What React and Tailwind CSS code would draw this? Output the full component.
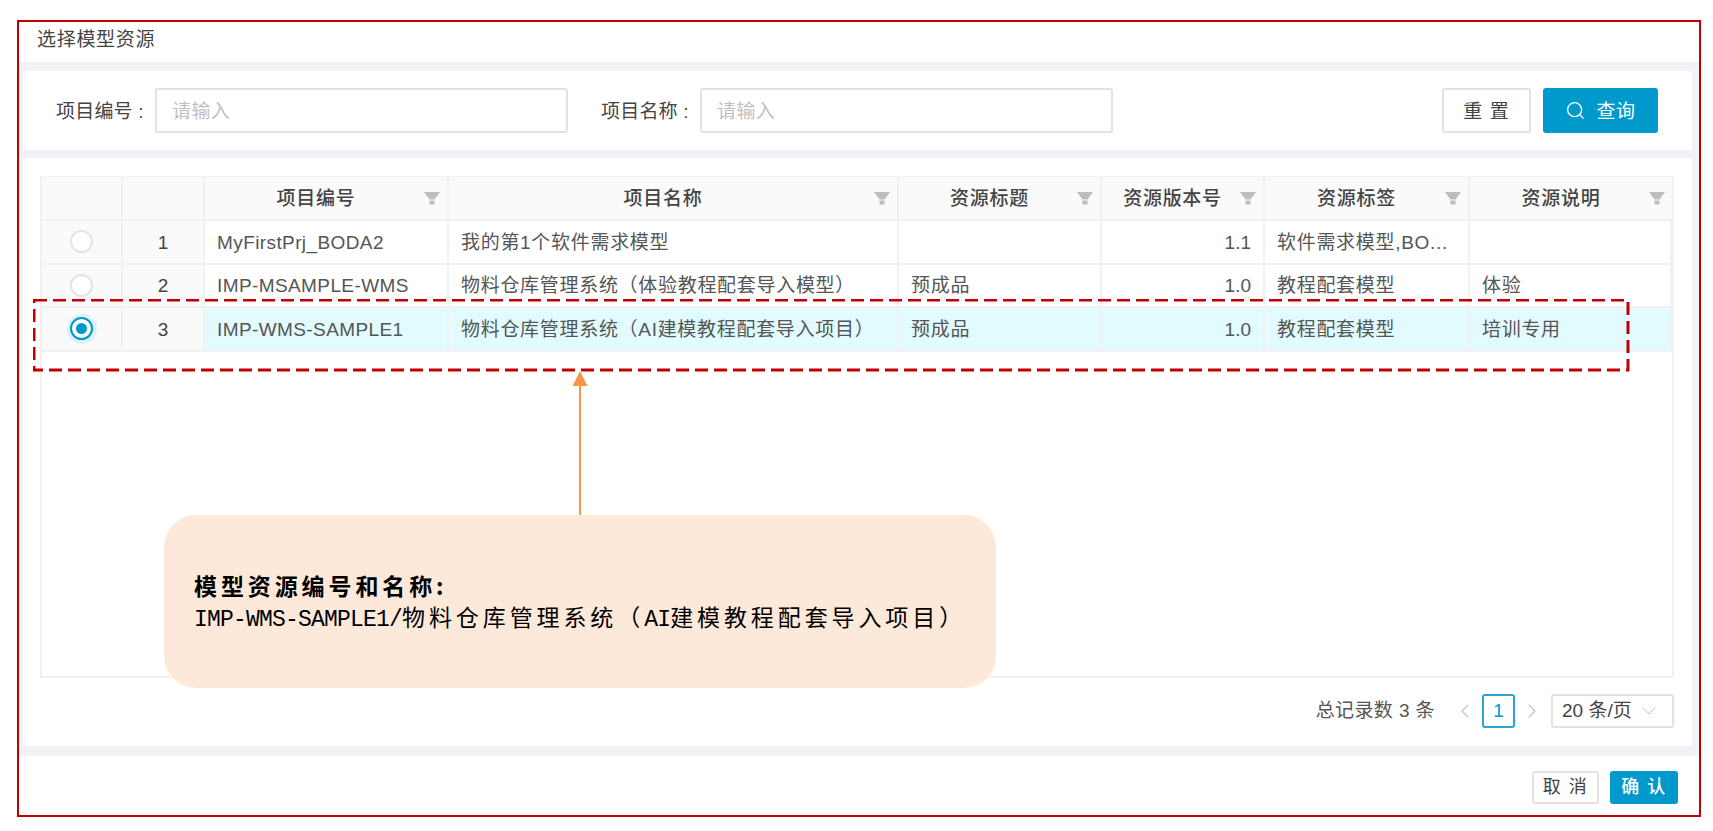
import { Search, ChevronLeft, ChevronRight, ChevronDown } from "lucide-react";

const font = "[font-family:'Liberation_Sans','Noto_Sans_CJK_SC',sans-serif]";

const columns = "grid-cols-[81px_82px_244px_450px_203px_163px_205px_1fr]";

const headers = [
	{ label: "项目编号" },
	{ label: "项目名称" },
	{ label: "资源标题" },
	{ label: "资源版本号" },
	{ label: "资源标签" },
	{ label: "资源说明" },
];

const rows = [
	{
		no: 1,
		code: "MyFirstPrj_BODA2",
		name: "我的第1个软件需求模型",
		title: "",
		version: "1.1",
		tag: "软件需求模型,BO...",
		desc: "",
	},
	{
		no: 2,
		code: "IMP-MSAMPLE-WMS",
		name: "物料仓库管理系统（体验教程配套导入模型）",
		title: "预成品",
		version: "1.0",
		tag: "教程配套模型",
		desc: "体验",
	},
	{
		no: 3,
		code: "IMP-WMS-SAMPLE1",
		name: "物料仓库管理系统（AI建模教程配套导入项目）",
		title: "预成品",
		version: "1.0",
		tag: "教程配套模型",
		desc: "培训专用",
		selected: true,
	},
];

const FilterIcon = () => (
	<svg width="16" height="13" viewBox="0 0 16 13" className="absolute right-[7px] top-[15px]">
		<path d="M0 0H16L10.5 7.5H5.5Z" fill="#bdbdbd" />
		<rect x="5.5" y="8.5" width="5" height="4" fill="#bdbdbd" />
	</svg>
);

const Radio = ({ checked }) =>
	checked ? (
		<div className="w-[30px] h-[30px] rounded-full bg-[#dcf0f8] flex items-center justify-center">
			<div className="w-[23px] h-[23px] rounded-full bg-white border-2 border-[#0099cc] flex items-center justify-center">
				<div className="w-[11px] h-[11px] rounded-full bg-[#0099cc]"></div>
			</div>
		</div>
	) : (
		<div className="w-[23px] h-[23px] rounded-full bg-white border-2 border-[#e4e4e4]"></div>
	);

const Field = ({ label }) => (
	<div className="flex items-center">
		<span className="w-[99px] pt-1 text-[19px] tracking-[0.2px] text-[#444] whitespace-nowrap">{label}&nbsp;:</span>
		<div className="w-[413px] h-[45px] bg-white border-2 border-[#e2e2e2] rounded-[3px] flex items-center pl-[15px] pt-1 text-[19px] tracking-[0.4px] text-[#bfbfbf]">
			请输入
		</div>
	</div>
);

const App = () => {
	return (
		<div className={`w-[1713px] h-[831px] bg-white pt-5 pl-[17px] ${font}`}>
			<div className="relative w-[1684px] h-[797px] border-2 border-[#c00000] flex flex-col">
				<div className="h-10 flex items-center pl-[18px] pb-[4px] text-[19px] tracking-[0.7px] text-[#444] shrink-0">
					选择模型资源
				</div>

				<div className="h-[694px] bg-[#f0f2f5] pt-[9px] pl-1 pr-[7px] flex flex-col gap-2 shrink-0">
					<div className="h-[79px] bg-white flex items-center pl-[33px] pr-[34px]">
						<Field label="项目编号" />
						<div className="ml-[33px]">
							<Field label="项目名称" />
						</div>
						<div className="ml-auto flex gap-3">
							<button className="w-[89px] h-[45px] pt-1 bg-white border-2 border-[#e2e2e2] rounded-[3px] text-[19px] tracking-[1px] text-[#444]">
								重 置
							</button>
							<button className="w-[115px] h-[45px] bg-[#0099cc] rounded-[3px] text-[19px] tracking-[0.5px] text-white flex items-center justify-center gap-[10px]">
								<Search size={21} strokeWidth={1.5} />
								<span className="pt-1">查询</span>
							</button>
						</div>
					</div>

					<div className="h-[588px] bg-white pt-[18px] pl-[17px] pr-[18px]">
						<div className="h-[502px] border-2 border-t-[1px] border-[#f1f1f1] box-border">
							<div className={`grid ${columns} h-[44px] bg-[#fafafa] border-b-2 border-[#f1f1f1]`}>
								<div className="border-r-2 border-[#f1f1f1]"></div>
								<div className="border-r-2 border-[#f1f1f1]"></div>
								{headers.map((h) => (
									<div
										key={h.label}
										className="relative flex items-center justify-center pr-[20px] pt-[2px] border-r-2 last:border-r-0 border-[#f1f1f1] text-[19px] tracking-[0.7px] font-medium text-[#444] whitespace-nowrap"
									>
										{h.label}
										<FilterIcon />
									</div>
								))}
							</div>

							{rows.map((row) => {
								const cell = "flex items-center pl-3 pt-[2px] border-r-2 border-[#f1f1f1] whitespace-nowrap overflow-hidden";
								return (
									<div
										key={row.no}
										className={`grid ${columns} h-[43.5px] border-b-2 border-[#f1f1f1] text-[19px] text-[#555] ${row.selected ? "bg-[#e1fbff]" : "bg-white"}`}
									>
										<div className="bg-[#fafafa] border-r-2 border-[#f1f1f1] flex items-center justify-center">
											<Radio checked={row.selected} />
										</div>
										<div className="bg-[#fafafa] border-r-2 border-[#f1f1f1] flex items-center justify-center pt-[2px] text-[#444]">
											{row.no}
										</div>
										<div className={`${cell} tracking-[0.4px]`}>{row.code}</div>
										<div className={`${cell} tracking-[0.7px]`}>{row.name}</div>
										<div className={`${cell} tracking-[0.7px]`}>{row.title}</div>
										<div className={`${cell} !justify-end pr-3`}>{row.version}</div>
										<div className={`${cell} tracking-[0.7px]`}>{row.tag}</div>
										<div className={`${cell} border-r-0 tracking-[0.7px]`}>{row.desc}</div>
									</div>
								);
							})}
						</div>

						<div className="mt-[16px] flex items-center justify-end text-[19px] text-[#555]">
							<span className="mr-[18px] tracking-[0.4px]">总记录数 3 条</span>
							<ChevronLeft size={24} strokeWidth={1.25} className="text-[#c4c4c4] mr-[5px]" />
							<div className="w-[33px] h-[34px] border-2 border-[#2aa5d3] rounded-[3px] flex items-center justify-center text-[#0099cc]">
								1
							</div>
							<ChevronRight size={24} strokeWidth={1.25} className="text-[#c4c4c4] ml-[5px] mr-[7px]" />
							<div className="w-[123px] h-[34px] border-2 border-[#e2e2e2] rounded-[3px] flex items-center pl-[9px] gap-[5px] text-[#444] whitespace-nowrap">
								<span>20 条/页</span>
								<ChevronDown size={24} strokeWidth={1} className="text-[#c4c4c4]" />
							</div>
						</div>
					</div>
				</div>

				<div className="flex-1 flex justify-end gap-[11px] pt-[15px] pr-[21px]">
					<button className="w-[67px] h-[33px] bg-white border-2 border-[#e2e2e2] rounded-[3px] text-[18px] tracking-[1.5px] text-[#444]">
						取 消
					</button>
					<button className="w-[68px] h-[33px] bg-[#0099cc] rounded-[3px] text-[18px] font-medium tracking-[1.5px] text-white">
						确 认
					</button>
				</div>

				{/* annotation layer over the dialog */}
				<svg width="1600" height="74" className="absolute left-[14px] top-[277px]">
					<rect x="1" y="1" width="1594" height="70" fill="none" stroke="#c00000" strokeWidth="3" strokeDasharray="13 6" />
				</svg>

				<svg width="16" height="146" className="absolute left-[553px] top-[349px]">
					<path d="M8 14V146" stroke="#f79646" strokeWidth="2" />
					<path d="M8 0L15.5 15H0.5Z" fill="#f79646" />
				</svg>

				<div className="absolute left-[145px] top-[493px] w-[832px] h-[173px] rounded-[32px] bg-[#fde9d9] pl-[30px] pt-[55px] text-[23px] text-black leading-[31px]">
					<div className="font-bold tracking-[3.9px] [font-family:'Noto_Sans_CJK_SC',sans-serif]">模型资源编号和名称:</div>
					<div className="whitespace-nowrap tracking-[3.9px] [font-family:'Noto_Sans_CJK_SC',sans-serif]">
						<span className="tracking-[-0.8px] [font-family:'Liberation_Mono',monospace]">IMP-WMS-SAMPLE1/</span>
						物料仓库管理系统（
						<span className="tracking-[-0.8px] [font-family:'Liberation_Mono',monospace]">AI</span>
						建模教程配套导入项目）
					</div>
				</div>
			</div>
		</div>
	);
};

export default App;
